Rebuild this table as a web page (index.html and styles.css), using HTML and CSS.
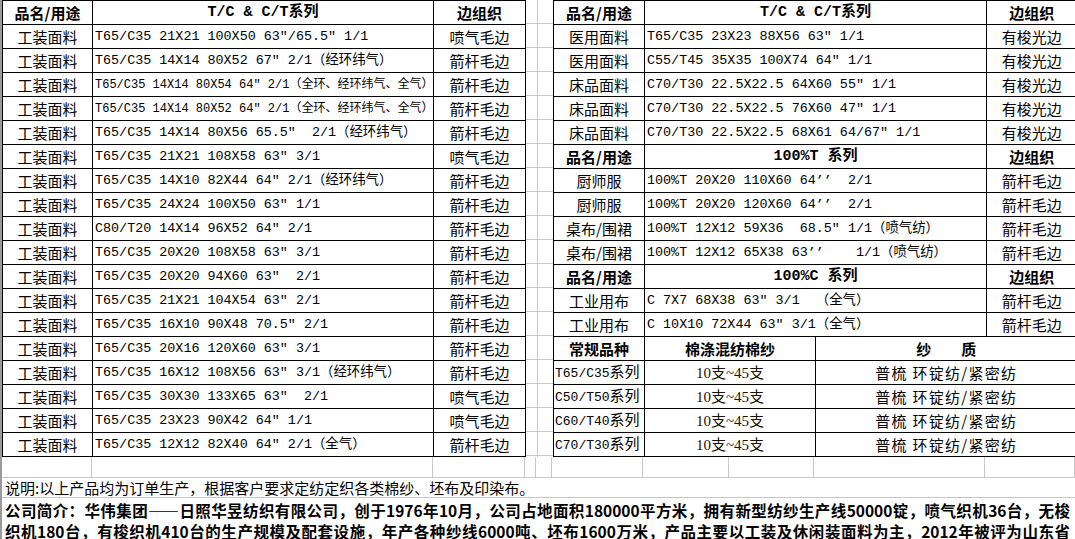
FILE: index.html
```html
<!DOCTYPE html>
<html lang="zh-CN">
<head>
<meta charset="utf-8">
<title>产品列表</title>
<link rel="stylesheet" href="styles.css">
</head>
<body>
<div class="sheet">
  <div class="top">
    <table class="grid">
      <colgroup><col class="w90"><col class="w341"><col class="w92"></colgroup>
      <tr><th>品名/用途</th><th class="hl">T/C &amp; C/T系列</th><th>边组织</th></tr>
      <tr><td class="nm">工装面料</td><td class="ds">T65/C35 21X21 100X50 63″/65.5″ 1/1</td><td class="nm">喷气毛边</td></tr>
      <tr><td class="nm">工装面料</td><td class="ds">T65/C35 14X14 80X52 67″ 2/1（经环纬气）</td><td class="nm">箭杆毛边</td></tr>
      <tr><td class="nm">工装面料</td><td class="ds sm">T65/C35 14X14 80X54 64″ 2/1（全环、经环纬气、全气）</td><td class="nm">箭杆毛边</td></tr>
      <tr><td class="nm">工装面料</td><td class="ds sm">T65/C35 14X14 80X52 64″ 2/1（全环、经环纬气、全气）</td><td class="nm">箭杆毛边</td></tr>
      <tr><td class="nm">工装面料</td><td class="ds">T65/C35 14X14 80X56 65.5″  2/1（经环纬气）</td><td class="nm">箭杆毛边</td></tr>
      <tr><td class="nm">工装面料</td><td class="ds">T65/C35 21X21 108X58 63″ 3/1</td><td class="nm">喷气毛边</td></tr>
      <tr><td class="nm">工装面料</td><td class="ds">T65/C35 14X10 82X44 64″ 2/1（经环纬气）</td><td class="nm">箭杆毛边</td></tr>
      <tr><td class="nm">工装面料</td><td class="ds">T65/C35 24X24 100X50 63″ 1/1</td><td class="nm">箭杆毛边</td></tr>
      <tr><td class="nm">工装面料</td><td class="ds">C80/T20 14X14 96X52 64″ 2/1</td><td class="nm">箭杆毛边</td></tr>
      <tr><td class="nm">工装面料</td><td class="ds">T65/C35 20X20 108X58 63″ 3/1</td><td class="nm">箭杆毛边</td></tr>
      <tr><td class="nm">工装面料</td><td class="ds">T65/C35 20X20 94X60 63″  2/1</td><td class="nm">箭杆毛边</td></tr>
      <tr><td class="nm">工装面料</td><td class="ds">T65/C35 21X21 104X54 63″ 2/1</td><td class="nm">箭杆毛边</td></tr>
      <tr><td class="nm">工装面料</td><td class="ds">T65/C35 16X10 90X48 70.5″ 2/1</td><td class="nm">箭杆毛边</td></tr>
      <tr><td class="nm">工装面料</td><td class="ds">T65/C35 20X16 120X60 63″ 3/1</td><td class="nm">箭杆毛边</td></tr>
      <tr><td class="nm">工装面料</td><td class="ds">T65/C35 16X12 108X56 63″ 3/1（经环纬气）</td><td class="nm">箭杆毛边</td></tr>
      <tr><td class="nm">工装面料</td><td class="ds">T65/C35 30X30 133X65 63″  2/1</td><td class="nm">喷气毛边</td></tr>
      <tr><td class="nm">工装面料</td><td class="ds">T65/C35 23X23 90X42 64″ 1/1</td><td class="nm">喷气毛边</td></tr>
      <tr><td class="nm">工装面料</td><td class="ds">T65/C35 12X12 82X40 64″ 2/1（全气）</td><td class="nm">箭杆毛边</td></tr>
    </table>

    <div class="gap"><div class="gap-a"></div><div class="gap-b"></div></div>

    <table class="grid">
      <colgroup><col class="w91"><col class="w86"><col class="w85"><col class="w171"><col class="w90"></colgroup>
      <tr><th>品名/用途</th><th colspan="3" class="hl">T/C &amp; C/T系列</th><th class="open">边组织</th></tr>
      <tr><td class="nm">医用面料</td><td colspan="3" class="ds">T65/C35 23X23 88X56 63″ 1/1</td><td class="nm open">有梭光边</td></tr>
      <tr><td class="nm">医用面料</td><td colspan="3" class="ds">C55/T45 35X35 100X74 64″ 1/1</td><td class="nm open">有梭光边</td></tr>
      <tr><td class="nm">床品面料</td><td colspan="3" class="ds">C70/T30 22.5X22.5 64X60 55″ 1/1</td><td class="nm open">有梭光边</td></tr>
      <tr><td class="nm">床品面料</td><td colspan="3" class="ds">C70/T30 22.5X22.5 76X60 47″ 1/1</td><td class="nm open">有梭光边</td></tr>
      <tr><td class="nm">床品面料</td><td colspan="3" class="ds">C70/T30 22.5X22.5 68X61 64/67″ 1/1</td><td class="nm open">有梭光边</td></tr>
      <tr><th>品名/用途</th><th colspan="3" class="hl">100%T 系列</th><th class="open">边组织</th></tr>
      <tr><td class="nm">厨师服</td><td colspan="3" class="ds">100%T 20X20 110X60 64’’  2/1</td><td class="nm open">箭杆毛边</td></tr>
      <tr><td class="nm">厨师服</td><td colspan="3" class="ds">100%T 20X20 120X60 64’’  2/1</td><td class="nm open">箭杆毛边</td></tr>
      <tr><td class="nm">桌布/围裙</td><td colspan="3" class="ds">100%T 12X12 59X36  68.5″ 1/1（喷气纺）</td><td class="nm open">箭杆毛边</td></tr>
      <tr><td class="nm">桌布/围裙</td><td colspan="3" class="ds">100%T 12X12 65X38 63’’    1/1（喷气纺）</td><td class="nm open">箭杆毛边</td></tr>
      <tr><th>品名/用途</th><th colspan="3" class="hl">100%C 系列</th><th class="open">边组织</th></tr>
      <tr><td class="nm">工业用布</td><td colspan="3" class="ds">C 7X7 68X38 63″ 3/1  （全气）</td><td class="nm open">箭杆毛边</td></tr>
      <tr><td class="nm">工业用布</td><td colspan="3" class="ds">C 10X10 72X44 63″ 3/1（全气）</td><td class="nm open">箭杆毛边</td></tr>
      <tr><th>常规品种</th><th colspan="2">棉涤混纺棉纱</th><th colspan="2" class="open">纱&emsp;&emsp;质</th></tr>
      <tr><td class="ds sr">T65/C35<span class="cj15">系列</span></td><td colspan="2" class="ct">10支~45支</td><td colspan="2" class="yq open">普梳 环锭纺/紧密纺</td></tr>
      <tr><td class="ds sr">C50/T50<span class="cj15">系列</span></td><td colspan="2" class="ct">10支~45支</td><td colspan="2" class="yq open">普梳 环锭纺/紧密纺</td></tr>
      <tr><td class="ds sr">C60/T40<span class="cj15">系列</span></td><td colspan="2" class="ct">10支~45支</td><td colspan="2" class="yq open">普梳 环锭纺/紧密纺</td></tr>
      <tr><td class="ds sr">C70/T30<span class="cj15">系列</span></td><td colspan="2" class="ct">10支~45支</td><td colspan="2" class="yq open">普梳 环锭纺/紧密纺</td></tr>
    </table>
  </div>

  <div class="blank-row">
    <span class="g w90"></span><span class="g w341"></span><span class="g w92"></span>
    <span class="g w11"></span><span class="g w16"></span>
    <span class="g w91"></span><span class="g w86"></span><span class="g w85"></span><span class="g w171"></span><span class="g w90"></span>
  </div>

  <div class="note-row">说明:以上产品均为订单生产，根据客户要求定纺定织各类棉纱、坯布及印染布。</div>

  <div class="intro">
    <span class="line">公司简介：华伟集团——日照华昱纺织有限公司，创于1976年10月，公司占地面积180000平方米，拥有新型纺纱生产线50000锭，喷气织机36台，无梭</span>
    <span class="line">织机180台，有梭织机410台的生产规模及配套设施，年产各种纱线6000吨、坯布1600万米，产品主要以工装及休闲装面料为主，2012年被评为山东省</span>
  </div>
</div>
</body>
</html>
```

FILE: styles.css
```css
html, body {
  margin: 0;
  padding: 0;
  background: #ffffff;
}

body {
  width: 1075px;
  height: 539px;
  overflow: hidden;
  font-family: "Noto Sans CJK SC", "Liberation Sans", sans-serif;
  color: #000000;
}

.sheet {
  border-left: 2px solid #9a9a9a;
  width: 1073px;
}

.top {
  display: flex;
  align-items: flex-start;
  height: 457px;
}

.grid {
  border-collapse: collapse;
  table-layout: fixed;
  width: 523px;
  flex: none;
}

.grid tr {
  height: 24px;
}

.grid th,
.grid td {
  border: 1px solid #000000;
  padding: 0;
  height: 23px;
  white-space: pre;
  overflow: hidden;
  line-height: 16px;
  vertical-align: middle;
}

.grid th {
  font-size: 15px;
  font-weight: 700;
  text-align: center;
}

.grid th.hl {
  font-family: "Liberation Mono", "Noto Sans CJK SC", monospace;
  font-size: 15px;
}

.grid .open {
  border-right: none;
}

.w90 { width: 90px; }
.w91 { width: 91px; }
.w92 { width: 92px; }
.w86 { width: 86px; }
.w85 { width: 85px; }
.w171 { width: 171px; }
.w341 { width: 341px; }
.w11 { width: 11px; }
.w16 { width: 16px; }

.nm {
  font-size: 15px;
  text-align: center;
}

.ds {
  font-family: "Liberation Mono", "DejaVu Sans Mono", "Noto Sans CJK SC", monospace;
  font-size: 13.4px;
  text-align: left;
  padding-left: 2px !important;
}

.ds.sm {
  font-size: 12px;
}

.ds.sr {
  font-size: 13px;
  padding-left: 1px !important;
}

.cj15 {
  font-family: "Noto Sans CJK SC", sans-serif;
  font-size: 15px;
  line-height: 16px;
}

.ct {
  font-family: "Liberation Serif", "Noto Sans CJK SC", serif;
  font-size: 15px;
  text-align: center;
  color: #1a1205;
}

.yq {
  font-size: 15px;
  letter-spacing: 1.3px;
  text-align: center;
}

.gap {
  display: flex;
  width: 27px;
  height: 457px;
  flex: none;
}

.gap-a,
.gap-b {
  height: 100%;
  background-image: repeating-linear-gradient(to bottom, transparent 0, transparent 23px, #c8c8c8 23px, #c8c8c8 24px);
  background-position: 0 0;
}

.gap-a {
  width: 11px;
  border-right: 1px solid #c8c8c8;
}

.gap-b {
  flex: 1;
}

.blank-row {
  display: flex;
  height: 20px;
  border-bottom: 1px solid #c8c8c8;
}

.blank-row .g {
  display: block;
  box-sizing: border-box;
  height: 100%;
  border-right: 1px solid #c8c8c8;
  flex: none;
}

.note-row {
  height: 19px;
  line-height: 19px;
  font-size: 15px;
  padding-left: 3px;
  border-bottom: 1px solid #c8c8c8;
  white-space: nowrap;
}

.intro {
  padding: 2px 5px 0 3px;
  font-size: 15.5px;
  font-weight: 700;
  line-height: 21px;
}

.intro .line {
  display: block;
  white-space: nowrap;
  text-align: justify;
  text-align-last: justify;
}
```
